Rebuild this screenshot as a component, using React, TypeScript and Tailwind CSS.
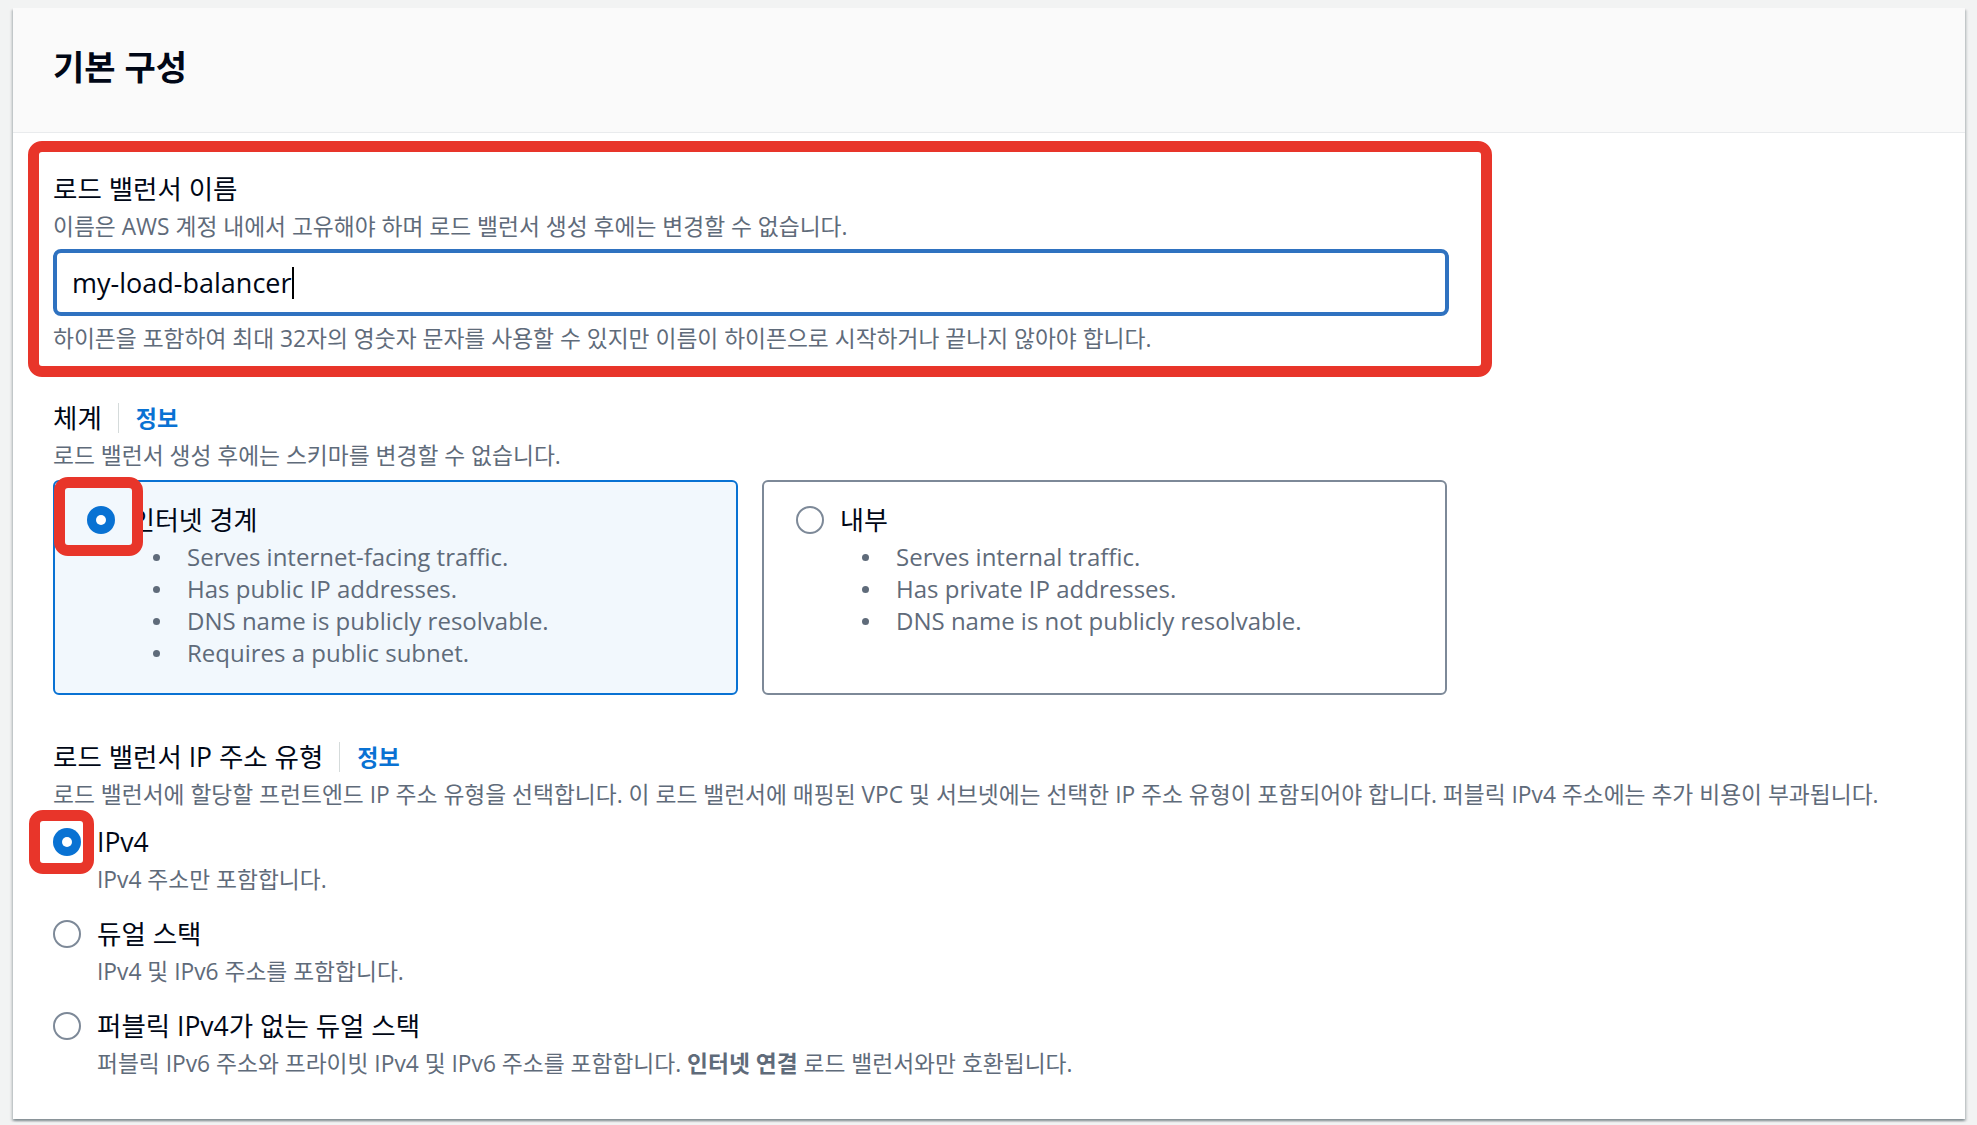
import React from 'react';

function Mark({ className }: { className: string }) {
  return (
    <span
      className={`pointer-events-none absolute z-10 rounded-[14px] border-[11px] border-[#e8352a] ${className}`}
    />
  );
}

function RadioDot({ checked }: { checked: boolean }) {
  if (checked) {
    return (
      <span className="flex h-[28px] w-[28px] shrink-0 items-center justify-center rounded-full bg-[#0972d3]">
        <span className="h-[10px] w-[10px] rounded-full bg-white" />
      </span>
    );
  }
  return <span className="h-[28px] w-[28px] shrink-0 rounded-full border-2 border-[#7d8998] bg-white" />;
}

function Label({ text, info }: { text: string; info?: boolean }) {
  return (
    <div className="flex h-[32px] items-center">
      <span className="text-[26.5px] leading-[32px] text-[#000716]">{text}</span>
      {info && (
        <>
          <span className="ml-[16px] h-[30px] border-l border-[#d5dbdb]" />
          <span className="pl-[17px] text-[23px] font-bold leading-[32px] text-[#0972d3]">정보</span>
        </>
      )}
    </div>
  );
}

function Desc({ children, className = '' }: { children: React.ReactNode; className?: string }) {
  return <p className={`text-[22.75px] leading-[30px] text-[#5f6b7a] ${className}`}>{children}</p>;
}

type Card = { title: string; items: string[]; checked: boolean };

const cards: Card[] = [
  {
    title: '인터넷 경계',
    checked: true,
    items: [
      'Serves internet-facing traffic.',
      'Has public IP addresses.',
      'DNS name is publicly resolvable.',
      'Requires a public subnet.',
    ],
  },
  {
    title: '내부',
    checked: false,
    items: ['Serves internal traffic.', 'Has private IP addresses.', 'DNS name is not publicly resolvable.'],
  },
];

function SchemeCard({ card }: { card: Card }) {
  return (
    <div
      className={
        card.checked
          ? 'rounded-[6px] border-2 border-[#0972d3] bg-[#f2f8fd] pb-[24px] pl-[32px] pr-[24px] pt-[22px]'
          : 'rounded-[6px] border-2 border-[#7d8998] bg-white pb-[24px] pl-[32px] pr-[24px] pt-[22px]'
      }
    >
      <div className="flex h-[32px] items-center gap-[16px]">
        <span className="relative flex">
          <RadioDot checked={card.checked} />
          {card.checked && <Mark className="left-[-33px] top-[-29px] h-[79px] w-[89px]" />}
        </span>
        <span className="text-[26px] leading-[32px] text-[#000716]">{card.title}</span>
      </div>
      <ul className="mt-[5px] pl-[66px]">
        {card.items.map((t) => (
          <li key={t} className="flex h-[32px] items-center text-[24px] text-[#5f6b7a]">
            <span className="h-[7px] w-[7px] shrink-0 rounded-full bg-[#5f6b7a]" />
            <span className="ml-[27px]">{t}</span>
          </li>
        ))}
      </ul>
    </div>
  );
}

type Opt = { label: string; desc: React.ReactNode; checked: boolean };

const ipOptions: Opt[] = [
  { label: 'IPv4', desc: 'IPv4 주소만 포함합니다.', checked: true },
  { label: '듀얼 스택', desc: 'IPv4 및 IPv6 주소를 포함합니다.', checked: false },
  {
    label: '퍼블릭 IPv4가 없는 듀얼 스택',
    desc: (
      <>
        퍼블릭 IPv6 주소와 프라이빗 IPv4 및 IPv6 주소를 포함합니다. <b className="font-bold">인터넷 연결</b> 로드
        밸런서와만 호환됩니다.
      </>
    ),
    checked: false,
  },
];

function App() {
  return (
    <div className="min-h-screen bg-[#f2f3f3] pl-[13px] pr-[12px] pt-[8px] font-['Open_Sans','Noto_Sans_CJK_KR',sans-serif]">
      <div className="bg-white shadow-[0_2px_2px_rgba(0,28,36,0.3),2px_2px_2px_rgba(0,28,36,0.12),-2px_2px_2px_rgba(0,28,36,0.12)]">
        {/* Header */}
        <div className="h-[125px] border-b border-[#e9ebed] bg-[#fafafa] pl-[40px] pt-[39px]">
          <h2 className="text-[34px] font-bold leading-[40px] text-[#000716]">기본 구성</h2>
        </div>

        <div className="pb-[40px] pl-[40px] pt-[40px]">
          {/* Name */}
          <div className="relative w-[1396px]">
            <Mark className="-bottom-[23px] -left-[25px] -right-[43px] -top-[32px]" />
            <Label text="로드 밸런서 이름" />
            <Desc className="mt-[7px]">이름은 AWS 계정 내에서 고유해야 하며 로드 밸런서 생성 후에는 변경할 수 없습니다.</Desc>
            <div className="mt-[7px] flex h-[67px] items-center rounded-[8px] border-4 border-[#2f72c0] bg-white pl-[15px]">
              <span className="text-[27px] leading-[34px] text-[#000716]">my-load-balancer</span>
              <span className="h-[32px] w-[2px] bg-black" />
            </div>
            <Desc className="mt-[8px]">
              하이픈을 포함하여 최대 32자의 영숫자 문자를 사용할 수 있지만 이름이 하이픈으로 시작하거나 끝나지 않아야
              합니다.
            </Desc>
          </div>

          {/* Scheme */}
          <div className="mt-[48px]">
            <Label text="체계" info />
            <Desc className="mt-[7px]">로드 밸런서 생성 후에는 스키마를 변경할 수 없습니다.</Desc>
            <div className="mt-[9px] grid w-[1394px] grid-cols-2 gap-[24px]">
              {cards.map((c) => (
                <SchemeCard key={c.title} card={c} />
              ))}
            </div>
          </div>

          {/* IP address type */}
          <div className="mt-[46px]">
            <Label text="로드 밸런서 IP 주소 유형" info />
            <Desc className="mt-[7px]">
              로드 밸런서에 할당할 프런트엔드 IP 주소 유형을 선택합니다. 이 로드 밸런서에 매핑된 VPC 및 서브넷에는
              선택한 IP 주소 유형이 포함되어야 합니다. 퍼블릭 IPv4 주소에는 추가 비용이 부과됩니다.
            </Desc>
            <div className="mt-[16px] flex flex-col gap-[23px]">
              {ipOptions.map((o) => (
                <div key={o.label}>
                  <div className="flex h-[32px] items-center gap-[16px]">
                    <span className="relative flex">
                      <RadioDot checked={o.checked} />
                      {o.checked && <Mark className="left-[-24px] top-[-18px] h-[64px] w-[65px]" />}
                    </span>
                    <span className="text-[26.5px] leading-[32px] text-[#000716]">{o.label}</span>
                  </div>
                  <Desc className="mt-[7px] pl-[44px]">{o.desc}</Desc>
                </div>
              ))}
            </div>
          </div>
        </div>
      </div>
    </div>
  );
}

export default App;
